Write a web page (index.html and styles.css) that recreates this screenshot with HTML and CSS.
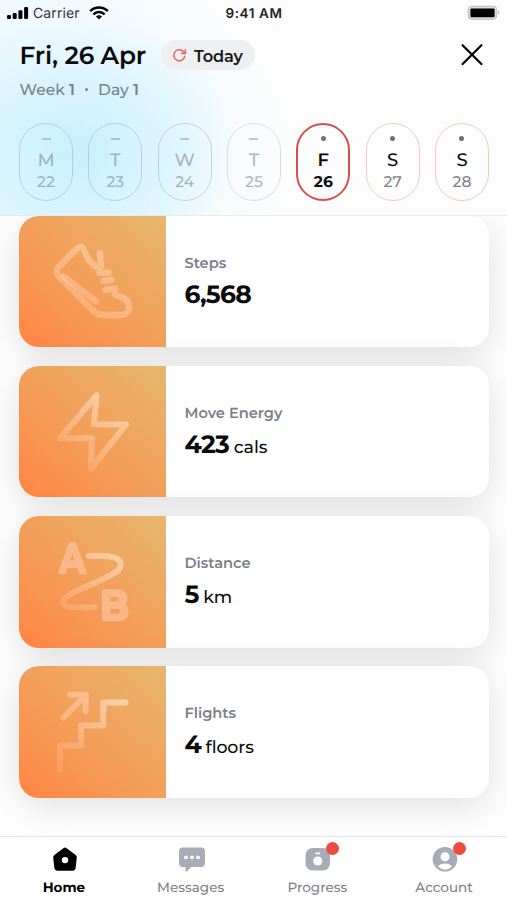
FILE: index.html
```
<!DOCTYPE html>
<html lang="en">
<head>
<meta charset="utf-8">
<title>Daily activity</title>
<link rel="stylesheet" href="styles.css">
</head>
<body>
<div class="app">
  <header class="header">
    <div class="status">
      <div class="carrier">
        <svg width="22" height="14" viewBox="0 0 22 14"><rect x="0" y="9" width="4" height="4" rx="1.2"/><rect x="5.7" y="7" width="4" height="6" rx="1.2"/><rect x="11.4" y="4.3" width="4" height="8.7" rx="1.2"/><rect x="17.1" y="1" width="4" height="12" rx="1.2"/></svg>
        <span class="carrier-name">Carrier</span>
        <svg width="20" height="14" viewBox="0 0 20 14"><path d="M1.2 5.1a12.6 12.6 0 0 1 17.6 0M4.4 8.4a8 8 0 0 1 11.2 0" fill="none" stroke="#000" stroke-width="2.5"/><path d="M10 13.5 6.9 10.5a4.4 4.4 0 0 1 6.2 0z"/></svg>
      </div>
      <span class="clock">9:41 AM</span>
      <svg class="battery" width="34" height="16" viewBox="0 0 34 16"><rect x="1.2" y="1.2" width="28.6" height="13" rx="3.6" fill="#ddd" stroke="#bbb" stroke-width="1"/><rect x="3.400" y="3.400" width="24.200" height="8.800" rx="1.2"/><path d="M31.3 5.6q2.4 2.2 0 4.4z" fill="#aaa"/></svg>
    </div>
    <div class="title-row">
      <h1 class="date">Fri, 26 Apr</h1>
      <button class="today">
        <svg width="15" height="15" viewBox="0 0 15 15" fill="none" stroke="#e7635b" stroke-width="1.5" stroke-linecap="round" stroke-linejoin="round"><path d="M12.7 8.2A5.5 5.5 0 1 1 11.4 3.7L13 5.2M13.4 1.7v3.8H9.6"/></svg>
        <span>Today</span>
      </button>
      <svg class="close" width="22" height="22" viewBox="0 0 22 22"><path d="M1.6 1.2 20.400 20M20.400 1.2 1.6 20" stroke="#000" stroke-width="2.2" stroke-linecap="round"/></svg>
    </div>
    <div class="sub"><span>Week <b>1</b></span><i></i><span>Day <b>1</b></span></div>
    <div class="days">
      <div class="day past"><i></i><span>M</span><small>22</small></div>
      <div class="day past"><i></i><span>T</span><small>23</small></div>
      <div class="day past"><i></i><span>W</span><small>24</small></div>
      <div class="day past"><i></i><span>T</span><small>25</small></div>
      <div class="day current"><i></i><span>F</span><small>26</small></div>
      <div class="day"><i></i><span>S</span><small>27</small></div>
      <div class="day"><i></i><span>S</span><small>28</small></div>
    </div>
  </header>

  <main class="cards">
    <svg class="defs" width="0" height="0"><defs>
      <linearGradient id="glow" gradientUnits="userSpaceOnUse" x1="98" y1="28" x2="48" y2="102"><stop offset="0" stop-color="#ffe6d2" stop-opacity=".65"/><stop offset="1" stop-color="#ffd0b0" stop-opacity=".2"/></linearGradient>
      <linearGradient id="soft" gradientUnits="userSpaceOnUse" x1="98" y1="28" x2="48" y2="102"><stop offset="0" stop-color="#ffdcc4" stop-opacity=".52"/><stop offset="1" stop-color="#ffd0b0" stop-opacity=".34"/></linearGradient>
    </defs></svg>
    <section class="card">
      <svg class="tile" viewBox="0 0 147 131.5"><g fill="none" stroke="url(#soft)" stroke-width="6.4" stroke-linecap="round" stroke-linejoin="round"><path d="M81 37.2 82 50.5Q77 52 72.5 47C66.500 41 66.500 34 62.500 30.700Q60 30.700 57.500 33L39 51.500Q36 54.500 39.500 60L74 94.500Q79 99 85 99H101C109 99 111.500 93 109.500 87.500C107.500 81.500 101 81 96 78.500"/><path d="M44.500 60.500 77 85.200M80.500 56.700H89.500M84.500 64.700 92.300 63.700M86.500 74 96 72.500"/></g></svg>
      <div class="info"><p class="label">Steps</p><p class="value"><strong>6,568</strong></p></div>
    </section>
    <section class="card">
      <svg class="tile" viewBox="0 0 147 131.5"><path d="M77.500 29.500 75 58.500H107L72 102.800 72.700 72.300H41Z" fill="none" stroke="url(#glow)" stroke-width="6" stroke-linejoin="round"/></svg>
      <div class="info"><p class="label">Move Energy</p><p class="value"><strong>423</strong> cals</p></div>
    </section>
    <section class="card">
      <svg class="tile" viewBox="0 0 147 131.5"><path d="M69.500 40C84 39.500 99 39.500 101.300 46.500C103 52 99 55 93 58.500C78 67 62 72 50 79C40 85 43.500 91.300 54 91.300H75.500" fill="none" stroke="url(#glow)" stroke-width="6" stroke-linecap="round"/><g class="pin"><text x="40.500" y="57" textLength="26" lengthAdjust="spacingAndGlyphs">A</text><text x="81" y="104" textLength="29" lengthAdjust="spacingAndGlyphs">B</text></g></svg>
      <div class="info"><p class="label">Distance</p><p class="value"><strong>5</strong> km</p></div>
    </section>
    <section class="card">
      <svg class="tile" viewBox="0 0 147 131.5"><g fill="none" stroke="url(#glow)" stroke-width="6" stroke-linecap="round" stroke-linejoin="round"><path d="M106.500 36.400H84.300V59.400H62V79.700H41V103"/><path stroke="url(#soft)" d="M44.500 51.500 66.500 29.500M51 28.700H66.700V45"/></g></svg>
      <div class="info"><p class="label">Flights</p><p class="value"><strong>4</strong> floors</p></div>
    </section>
  </main>

  <nav class="tabs">
    <a class="tab active"><span class="icon"><svg width="28" height="28" viewBox="0 0 28 28"><path fill-rule="evenodd" d="M12.400 2.200Q14 1 15.600 2.200L24.700 8.900Q26 9.900 25.800 11.500L24.600 22.300Q24.200 24.700 21.800 24.700H6.200Q3.800 24.700 3.400 22.300L2.200 11.500Q2 9.900 3.300 8.900ZM14 10.900a3.200 3.200 0 1 0 0 6.400a3.200 3.200 0 1 0 0-6.400Z"/></svg></span><span>Home</span></a>
    <a class="tab"><span class="icon"><svg width="28" height="28" viewBox="0 0 28 28"><path fill="#a7acb7" d="M5 1.500H23Q27 1.500 27 5.500V17Q27 21 23 21H13L9.200 25.300Q7.500 26.500 7.500 24.500V21H5Q1 21 1 17V5.500Q1 1.500 5 1.500Z"/><g fill="#fff"><circle cx="8" cy="11.300" r="1.900"/><circle cx="14" cy="11.300" r="1.900"/><circle cx="20" cy="11.300" r="1.900"/></g></svg></span><span>Messages</span></a>
    <a class="tab"><span class="icon"><svg width="28" height="28" viewBox="0 0 28 28"><rect x="1.500" y="2" width="24.500" height="22.600" rx="7" fill="#a7acb7"/><circle cx="13.800" cy="15" r="4.600" fill="#fff"/><rect x="11.300" y="6.600" width="5" height="1.600" rx=".8" fill="#fff"/></svg><b class="badge"></b></span><span>Progress</span></a>
    <a class="tab"><span class="icon"><svg width="28" height="28" viewBox="0 0 28 28"><circle cx="14" cy="13.200" r="12.300" fill="#a7acb7"/><circle cx="14" cy="10.700" r="4.500" fill="#fff"/><path fill="#fff" d="M7 20.500C9.200 16.400 18.800 16.400 21 20.500Q17.700 23.700 14 23.700T7 20.500Z"/></svg><b class="badge"></b></span><span>Account</span></a>
  </nav>
</div>
</body>
</html>
```
FILE: styles.css
```
* { box-sizing: border-box; }
body { margin: 0; background: #fff; font-family: Montserrat, Inter, sans-serif; color: #0b0b0d; text-rendering: geometricPrecision; }
h1, p { margin: 0; }
svg { display: block; flex: none; }
.app { width: 507px; height: 900px; display: flex; flex-direction: column; overflow: hidden; }

.header {
  height: 216px; flex: none; position: relative; z-index: 1;
  border-bottom: 1.500px solid rgba(200, 210, 215, .4);
  background:
    radial-gradient(ellipse 215px 180px at 80px 152px, rgba(194, 238, 255, .85), rgba(204, 241, 255, .65) 40%, rgba(235, 249, 255, .3) 75%, rgba(255, 255, 255, 0)),
    linear-gradient(90deg, #f0f9ff, #fdfdfd 45%);
}
.status { height: 26px; padding: 0 8px 0 7px; display: grid; grid-template-columns: 1fr auto 1fr; align-items: center; }
.carrier { display: flex; align-items: center; }
.carrier-name { margin: 0 9px 0 4px; font: 14px Inter, sans-serif; letter-spacing: .1px; color: #333; }
.clock { font: 600 13.500px Inter, sans-serif; letter-spacing: .6px; color: #222; padding: 1px 0 0 2px; }
.battery { justify-self: end; margin-right: -2px; }
.title-row { height: 30px; margin: 14px 24px 0 19.500px; display: flex; align-items: center; }
.date { width: 141.500px; padding-top: 1px; font-size: 24.800px; font-weight: 600; letter-spacing: -.2px; white-space: nowrap; }
.today { width: 94px; height: 30px; border: 0; border-radius: 15px; padding: 0 0 0 11px; display: flex; align-items: center; gap: 7px; background: #eeeff0; font: 600 16.200px Montserrat, Inter, sans-serif; letter-spacing: -.15px; color: #161618; }
.today span { padding-top: 1px; }
.close { margin-left: auto; }
.sub { height: 20px; margin: 9px 0 0 19.500px; display: flex; align-items: center; font-size: 15.600px; font-weight: 500; color: #74838c; }
.sub b { font-weight: 600; }
.sub i { width: 3px; height: 3px; border-radius: 50%; background: #74838c; margin: 1px 10px 0 10px; }
.days { margin: 24px 18px 0 19px; display: flex; justify-content: space-between; }
.day { width: 54px; height: 78px; border: 1.500px solid #f2c9c8; border-radius: 27px; display: flex; flex-direction: column; align-items: center; }
.day i { width: 5px; height: 5px; border-radius: 50%; background: #707075; margin-top: 12px; }
.day span { margin-top: 7.500px; font-size: 18px; line-height: 22px; font-weight: 500; }
.day small { margin-top: 1.500px; font-size: 15.500px; line-height: 20px; font-weight: 500; color: #808288; }
.past { border-color: rgba(150, 165, 170, .45); }
.past i { width: 9px; height: 2px; border-radius: 0; margin: 14px 0 1px; background: rgba(140, 150, 155, .5); }
.day.past span, .day.past small { color: rgba(130, 140, 145, .65); }
.past:nth-child(4) { border-color: #ddd; }
.current { border: 2.500px solid #d45149; }
.current i { margin-top: 11px; }
.current span { font-weight: 600; }
.current small { font-weight: 700; color: #0b0b0d; }

.cards { height: 620px; flex: none; padding: 0 18px 0 19px; display: flex; flex-direction: column; gap: 18.800px; background: #fff; }
.defs { position: absolute; }
.card { height: 131.500px; flex: none; display: flex; border-radius: 20px; background: #fff; box-shadow: 0 8px 38px rgba(0, 0, 0, .135); position: relative; }
.card:first-of-type { margin-top: -.5px; }
.tile { width: 147px; height: 131.500px; border-radius: 20px 0 0 20px; background: linear-gradient(42deg, #ff8746 5%, #f49c58 42%, #e6b76d 100%); }
.pin { font: 700 42px Montserrat, sans-serif; fill: #f8bd92; stroke: #f8bd92; stroke-width: 2.500px; stroke-linejoin: round; opacity: .85; }
.info { padding: 37px 0 0 18.500px; }
.label { font-size: 14.600px; line-height: 21px; font-weight: 600; color: #7b8089; }
.value { margin-top: 5px; font-size: 17.400px; line-height: 32px; font-weight: 500; letter-spacing: -.1px; white-space: nowrap; }
.value strong { font-size: 25px; font-weight: 700; letter-spacing: -.7px; }

.tabs { height: 64px; flex: none; position: relative; z-index: 1; border-top: 1px solid #e4e4e5; background: #fff; display: grid; grid-template-columns: repeat(4, 1fr); }
.tab { display: flex; flex-direction: column; align-items: center; gap: 5px; padding: 9px 0 0 1px; font-size: 13.500px; line-height: 18px; font-weight: 500; color: #7f828a; }
.active { font-weight: 700; color: #000; }
.icon { position: relative; margin-left: 2px; }
.icon svg { width: 28px; height: 28px; }
.badge { position: absolute; top: -4px; right: -7px; width: 13px; height: 13px; border-radius: 50%; background: #ed4c40; }
```
